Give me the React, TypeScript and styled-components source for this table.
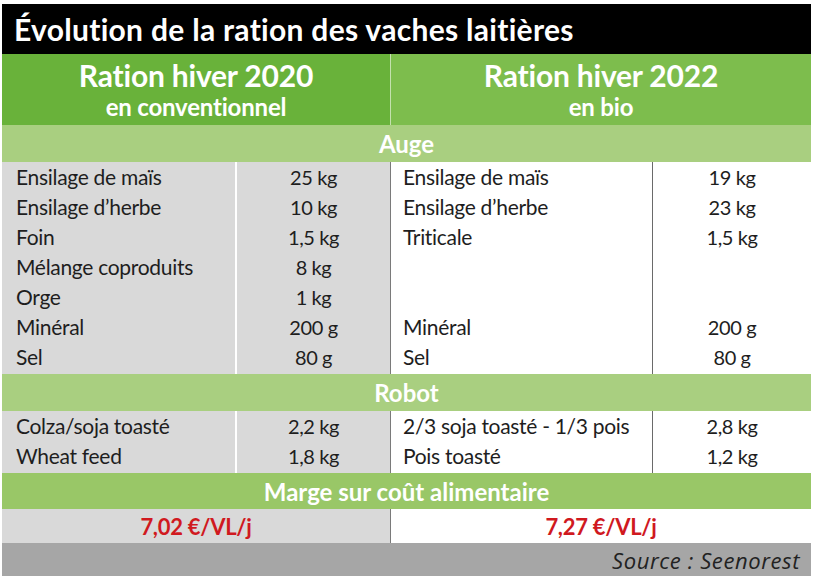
import React from "react";
import styled, { createGlobalStyle } from "styled-components";

const GlobalStyle = createGlobalStyle`
  html, body { margin: 0; padding: 0; background: #ffffff; }
  body { font-family: Lato, "Open Sans", sans-serif; }
`;

const Frame = styled.div`
  width: 809px;
  margin: 4px 0 0 2px;
  display: flex;
  flex-direction: column;
  font-family: Lato, "Open Sans", sans-serif;
`;

const TitleBar = styled.div`
  height: 50px;
  background: #000;
  color: #fff;
  display: flex;
  align-items: center;
  padding-left: 12px;
  font-size: 30px;
  font-weight: 700;
  letter-spacing: 0.3px;
`;

const TwoCols = styled.div`
  display: grid;
  grid-template-columns: 388px 1fr;
`;

const HeaderCell = styled.div<{ $bg: string; $divider?: boolean }>`
  height: 71px;
  background: ${(p) => p.$bg};
  border-left: ${(p) => (p.$divider ? "1px solid rgba(255,255,255,0.55)" : "none")};
  color: #fff;
  display: flex;
  flex-direction: column;
  align-items: center;
  justify-content: center;
  font-weight: 700;
`;

const HeaderTitle = styled.div`
  font-size: 30px;
  line-height: 34px;
  letter-spacing: -0.2px;
`;

const HeaderSub = styled.div`
  font-size: 24px;
  line-height: 30px;
  letter-spacing: -0.2px;
`;

const Band = styled.div<{ $bg: string; $h: number }>`
  height: ${(p) => p.$h}px;
  background: ${(p) => p.$bg};
  color: #fff;
  display: flex;
  align-items: center;
  justify-content: center;
  font-size: 24px;
  font-weight: 700;
  letter-spacing: 0;
`;

const Half = styled.div<{ $bg: string; $labelW: number; $divider?: boolean }>`
  display: grid;
  grid-template-columns: ${(p) => p.$labelW}px 1fr;
  background: ${(p) => p.$bg};
  border-left: ${(p) => (p.$divider ? "1px solid #7a7a7a" : "none")};
`;

const LabelCol = styled.div<{ $pad: number }>`
  display: flex;
  flex-direction: column;
  padding: 0 0 2px ${(p) => p.$pad}px;
`;

const ValueCol = styled.div<{ $line: string }>`
  display: flex;
  flex-direction: column;
  align-items: center;
  padding: 0 0 2px;
  border-left: ${(p) => p.$line};
`;

const Line = styled.div<{ $value?: boolean }>`
  height: 30px;
  line-height: 30px;
  font-size: ${(p) => (p.$value ? 20 : 21)}px;
  color: #1e1e1e;
  letter-spacing: ${(p) => (p.$value ? "-0.4px" : "-0.3px")};
  white-space: nowrap;
`;

const ResultCell = styled.div<{ $bg: string; $divider?: boolean }>`
  height: 34px;
  background: ${(p) => p.$bg};
  border-left: ${(p) => (p.$divider ? "1px solid #7a7a7a" : "none")};
  display: flex;
  align-items: center;
  justify-content: center;
  color: #d0191f;
  font-size: 22px;
  font-weight: 700;
  letter-spacing: -0.3px;
`;

const SourceBar = styled.div`
  height: 33px;
  background: #a6a6a6;
  display: flex;
  align-items: center;
  justify-content: flex-end;
  padding-right: 11px;
  font-family: "Open Sans", Lato, sans-serif;
  font-style: italic;
  font-weight: 400;
  font-size: 22px;
  letter-spacing: 0.6px;
  color: #222222;
`;

type Item = [string, string];

const augeLeft: Item[] = [
  ["Ensilage de maïs", "25 kg"],
  ["Ensilage d’herbe", "10 kg"],
  ["Foin", "1,5 kg"],
  ["Mélange coproduits", "8 kg"],
  ["Orge", "1 kg"],
  ["Minéral", "200 g"],
  ["Sel", "80 g"],
];

const augeRight: Item[] = [
  ["Ensilage de maïs", "19 kg"],
  ["Ensilage d’herbe", "23 kg"],
  ["Triticale", "1,5 kg"],
  ["", ""],
  ["", ""],
  ["Minéral", "200 g"],
  ["Sel", "80 g"],
];

const robotLeft: Item[] = [
  ["Colza/soja toasté", "2,2 kg"],
  ["Wheat feed", "1,8 kg"],
];

const robotRight: Item[] = [
  ["2/3 soja toasté - 1/3 pois", "2,8 kg"],
  ["Pois toasté", "1,2 kg"],
];

const DataBlock: React.FC<{ left: Item[]; right: Item[] }> = ({ left, right }) => (
  <TwoCols>
    <Half $bg="#d9d9d9" $labelW={233}>
      <LabelCol $pad={14}>
        {left.map(([l], i) => (
          <Line key={i}>{l || "\u00a0"}</Line>
        ))}
      </LabelCol>
      <ValueCol $line="2px solid #ffffff">
        {left.map(([, v], i) => (
          <Line key={i} $value>{v || "\u00a0"}</Line>
        ))}
      </ValueCol>
    </Half>
    <Half $bg="#ffffff" $labelW={261} $divider>
      <LabelCol $pad={12}>
        {right.map(([l], i) => (
          <Line key={i}>{l || "\u00a0"}</Line>
        ))}
      </LabelCol>
      <ValueCol $line="1px solid #6a6a6a">
        {right.map(([, v], i) => (
          <Line key={i} $value>{v || "\u00a0"}</Line>
        ))}
      </ValueCol>
    </Half>
  </TwoCols>
);

export default function App() {
  return (
    <>
      <GlobalStyle />
      <Frame>
        <TitleBar>Évolution de la ration des vaches laitières</TitleBar>
        <TwoCols>
          <HeaderCell $bg="#69b23a">
            <HeaderTitle>Ration hiver 2020</HeaderTitle>
            <HeaderSub>en conventionnel</HeaderSub>
          </HeaderCell>
          <HeaderCell $bg="#7dbd4d" $divider>
            <HeaderTitle>Ration hiver 2022</HeaderTitle>
            <HeaderSub>en bio</HeaderSub>
          </HeaderCell>
        </TwoCols>
        <Band $bg="#a9cf80" $h={37}>Auge</Band>
        <DataBlock left={augeLeft} right={augeRight} />
        <Band $bg="#a9cf80" $h={37}>Robot</Band>
        <DataBlock left={robotLeft} right={robotRight} />
        <Band $bg="#99c767" $h={36}>Marge sur coût alimentaire</Band>
        <TwoCols>
          <ResultCell $bg="#d9d9d9">7,02 €/VL/j</ResultCell>
          <ResultCell $bg="#ffffff" $divider>7,27 €/VL/j</ResultCell>
        </TwoCols>
        <SourceBar>Source : Seenorest</SourceBar>
      </Frame>
    </>
  );
}
